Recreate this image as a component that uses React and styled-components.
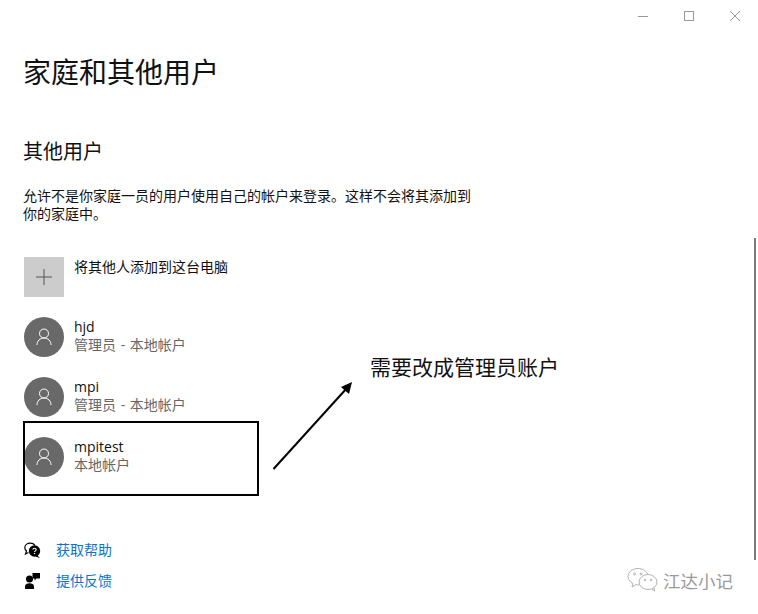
import React from "react";
import styled, { createGlobalStyle } from "styled-components";

const Global = createGlobalStyle`
  html, body { margin: 0; padding: 0; background: #fff; }
  body { font-family: "Open Sans", "Noto Sans CJK SC", sans-serif; color: #000; }
  * { box-sizing: border-box; }
`;
const Page = styled.div`position: relative; width: 758px; height: 614px; overflow: hidden; background: #fff;`;
const TitleBar = styled.div`display: flex; justify-content: flex-end; height: 32px;`;
const WinButton = styled.div`width: 46px; height: 32px; display: flex; align-items: center; justify-content: center;`;
const Content = styled.main`padding: 20px 0 0 24px;`;
const Title = styled.h1`margin: 0 0 0 -1px; font-size: 28px; line-height: 40px; font-weight: 400; color: #111;`;
const Section = styled.h2`margin: 40px 0 0 -1px; font-size: 20px; line-height: 40px; font-weight: 400; color: #111;`;
const Desc = styled.p`margin: 15px 0 0 -1px; width: 452px; font-size: 14px; line-height: 18px; color: #111;`;
const List = styled.div`margin-top: 34px; display: flex; flex-direction: column; gap: 20px;`;
const Row = styled.div`display: flex; gap: 10px; height: 40px;`;
const AddTile = styled.div`width: 40px; height: 40px; background: #ccc; display: flex; align-items: center; justify-content: center;`;
const Avatar = styled.div`width: 40px; height: 40px; border-radius: 50%; background: #696969; display: flex; align-items: center; justify-content: center;`;
const RowText = styled.div`display: flex; flex-direction: column; margin-top: 0;`;
const Name = styled.div`font-size: 14px; line-height: 19px; color: #111;`;
const Sub = styled.div`font-size: 14px; line-height: 18px; color: #666; word-spacing: 1px;`;
const Links = styled.div`margin-top: 63px; display: flex; flex-direction: column; gap: 11px;`;
const LinkRow = styled.div`display: flex; align-items: center; gap: 15px; height: 20px;`;
const LinkText = styled.a`font-size: 14px; line-height: 20px; color: #0a74cc;`;
const IconSlot = styled.span`display: flex; width: 17px; height: 18px;`;

const Highlight = styled.div`position: absolute; left: 23px; top: 421px; width: 236px; height: 75px; border: 2px solid #000;`;
const Arrow = styled.svg`position: absolute; left: 265px; top: 375px;`;
const Note = styled.div`position: absolute; left: 370px; top: 353px; font-size: 21px; line-height: 28px; color: #111; white-space: nowrap;`;
const Scrollbar = styled.div`position: absolute; left: 754px; top: 238px; width: 2px; height: 322px; background: #7a7a7a;`;
const Watermark = styled.div`position: absolute; left: 625px; top: 566px; display: flex; align-items: center; gap: 3px; color: #9a9a9a;`;
const MarkText = styled.span`font-size: 17.5px; line-height: 30px; white-space: nowrap;`;

const PersonIcon = () => (
  <svg width="16" height="18" viewBox="0 0 16 18" fill="none" stroke="#fff" strokeWidth="1">
    <circle cx="8" cy="5.5" r="4.5" />
    <path d="M1 17c0-4 3-7 7-7s7 3 7 7" />
  </svg>
);

export default function App() {
  const users = [
    ["hjd", "管理员 - 本地帐户"],
    ["mpi", "管理员 - 本地帐户"],
    ["mpitest", "本地帐户"],
  ];
  return (
    <Page>
      <Global />
      <TitleBar>
        <WinButton>
          <svg width="10" height="10"><path d="M0 5.5h10" stroke="#999" /></svg>
        </WinButton>
        <WinButton>
          <svg width="10" height="10"><rect x=".5" y=".5" width="9" height="9" fill="none" stroke="#999" /></svg>
        </WinButton>
        <WinButton>
          <svg width="10" height="10"><path d="M0 0l10 10M10 0L0 10" stroke="#999" /></svg>
        </WinButton>
      </TitleBar>
      <Content>
        <Title>家庭和其他用户</Title>
        <Section>其他用户</Section>
        <Desc>允许不是你家庭一员的用户使用自己的帐户来登录。这样不会将其添加到你的家庭中。</Desc>
        <List>
          <Row>
            <AddTile>
              <svg width="16" height="16"><path d="M8 0v16M0 8h16" stroke="#555" /></svg>
            </AddTile>
            <RowText><Name>将其他人添加到这台电脑</Name></RowText>
          </Row>
          {users.map(([n, s]) => (
            <Row key={n}>
              <Avatar><PersonIcon /></Avatar>
              <RowText><Name>{n}</Name><Sub>{s}</Sub></RowText>
            </Row>
          ))}
        </List>
        <Links>
          <LinkRow>
            <IconSlot>
              <svg width="17" height="18" viewBox="0 0 17 18">
                <path d="M4.500 11.500L1.500 13l1-3C1.200 9 .8 7.800.8 6.800.8 4.200 3.200 2.200 6.300 2.200c2 0 3.700.8 4.700 2.200" fill="none" stroke="#000" strokeWidth="1.200" />
                <circle cx="10.500" cy="10" r="5.700" fill="#000" />
                <path d="M13 14l3 3-4.500-1.500z" fill="#000" />
                <path d="M8.800 8.700c.2-1 .9-1.400 1.700-1.400 1 0 1.700.6 1.700 1.400 0 1.200-1.700 1.100-1.700 2.400" fill="none" stroke="#fff" strokeWidth="1.100" />
                <rect x="9.900" y="11.900" width="1.200" height="1.200" fill="#fff" />
              </svg>
            </IconSlot>
            <LinkText>获取帮助</LinkText>
          </LinkRow>
          <LinkRow>
            <IconSlot>
              <svg width="17" height="18" viewBox="0 0 17 18" fill="#000">
                <circle cx="5.500" cy="7" r="3.500" />
                <path d="M1 17v-2.500C1 12.300 3 11.300 5.500 11.300s4.500 1 4.500 3.200V17z" />
                <path d="M8.500 1H16v5.500h-3.500L10.500 8.500V6.500h-2z" />
              </svg>
            </IconSlot>
            <LinkText>提供反馈</LinkText>
          </LinkRow>
        </Links>
      </Content>
      <Scrollbar />
      <Highlight />
      <Arrow width="95" height="100" viewBox="0 0 95 100">
        <path d="M8.500 94L82 13" stroke="#000" strokeWidth="2" fill="none" />
        <path d="M87 7l-3 12-8-7z" fill="#000" />
      </Arrow>
      <Note>需要改成管理员账户</Note>
      <Watermark>
        <svg width="35" height="30" viewBox="0 0 35 30" fill="none" stroke="#aaa" strokeWidth=".9">
          <path d="M14 19c-1 0-2-.1-3-.4L7 21l1-3.500C5 16 3 13 3 10.500 3 6 7.500 2.500 13 2.500c4.800 0 9 2.800 10 6.500" />
          <ellipse cx="23" cy="16" rx="9" ry="7.500" />
          <path d="M27 23l2.500 2-.5-3.500" />
          <circle cx="9.500" cy="8" r="1" /><circle cx="16" cy="8" r="1" />
          <circle cx="20" cy="14" r=".8" /><circle cx="26" cy="14" r=".8" />
        </svg>
        <MarkText>江达小记</MarkText>
      </Watermark>
    </Page>
  );
}
